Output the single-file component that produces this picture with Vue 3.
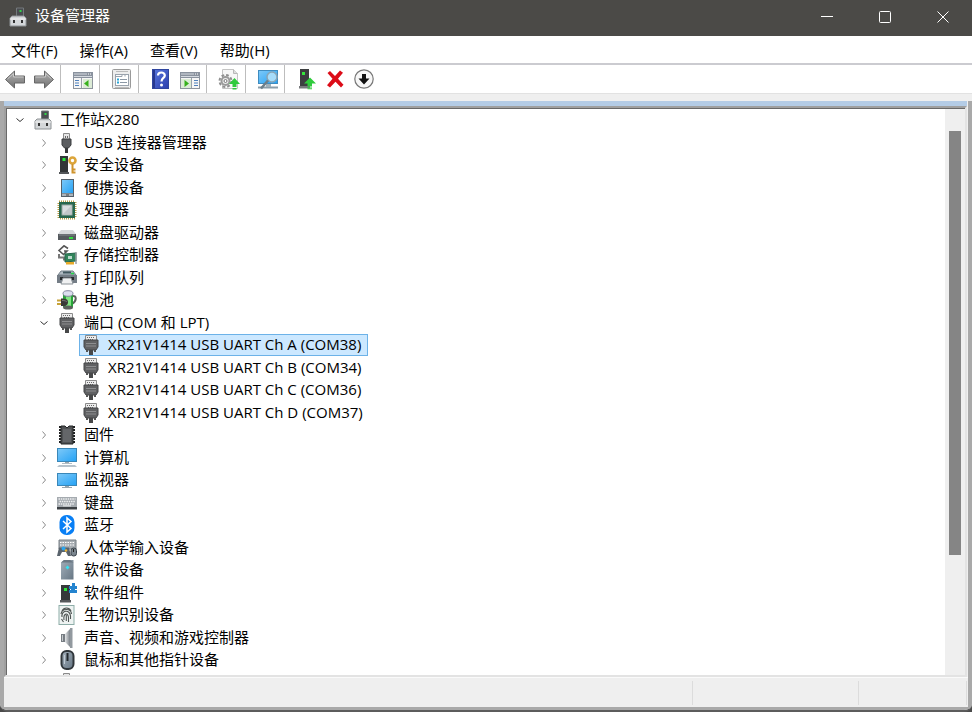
<script setup>
import { ref } from 'vue';

const menus = ['文件(F)', '操作(A)', '查看(V)', '帮助(H)'];

const toolGroups = [
    [{ icon: 'back', label: '后退' }, { icon: 'forward', label: '前进' }],
    [{ icon: 'tree', label: '显示/隐藏控制台树' }],
    [{ icon: 'props', label: '属性' }],
    [{ icon: 'help', label: '帮助' }, { icon: 'pane', label: '显示/隐藏操作窗格' }],
    [{ icon: 'update', label: '更新驱动程序' }],
    [{ icon: 'scan', label: '扫描检测硬件改动' }],
    [{ icon: 'enable', label: '启用设备' }, { icon: 'remove', label: '卸载设备' }, { icon: 'disable', label: '禁用设备' }]
];

const nodes = [
    { level: 0, icon: 'root', text: '工作站X280', open: true },
    { level: 1, icon: 'usb', text: 'USB 连接器管理器' },
    { level: 1, icon: 'security', text: '安全设备' },
    { level: 1, icon: 'portable', text: '便携设备' },
    { level: 1, icon: 'cpu', text: '处理器' },
    { level: 1, icon: 'disk', text: '磁盘驱动器' },
    { level: 1, icon: 'storage', text: '存储控制器' },
    { level: 1, icon: 'printer', text: '打印队列' },
    { level: 1, icon: 'battery', text: '电池' },
    { level: 1, icon: 'port', text: '端口 (COM 和 LPT)', open: true },
    { level: 2, icon: 'port', text: 'XR21V1414 USB UART Ch A (COM38)' },
    { level: 2, icon: 'port', text: 'XR21V1414 USB UART Ch B (COM34)' },
    { level: 2, icon: 'port', text: 'XR21V1414 USB UART Ch C (COM36)' },
    { level: 2, icon: 'port', text: 'XR21V1414 USB UART Ch D (COM37)' },
    { level: 1, icon: 'firmware', text: '固件' },
    { level: 1, icon: 'computer', text: '计算机' },
    { level: 1, icon: 'monitor', text: '监视器' },
    { level: 1, icon: 'keyboard', text: '键盘' },
    { level: 1, icon: 'bluetooth', text: '蓝牙' },
    { level: 1, icon: 'hid', text: '人体学输入设备' },
    { level: 1, icon: 'softdev', text: '软件设备' },
    { level: 1, icon: 'softcomp', text: '软件组件' },
    { level: 1, icon: 'finger', text: '生物识别设备' },
    { level: 1, icon: 'sound', text: '声音、视频和游戏控制器' },
    { level: 1, icon: 'mouse', text: '鼠标和其他指针设备' },
    { level: 1, icon: 'usb', text: '通用串行总线控制器' }
];

const selected = ref(10);
</script>

<template>
    <svg class="sprite" aria-hidden="true">
        <defs>
            <linearGradient id="g-blue" x1="0" y1="0" x2="1" y2="1">
                <stop offset="0" stop-color="#7cc8f8" /><stop offset="1" stop-color="#27a3f5" />
            </linearGradient>
            <linearGradient id="g-gray" x1="0" y1="0" x2="0" y2="1">
                <stop offset="0" stop-color="#b4b4b4" /><stop offset="1" stop-color="#707070" />
            </linearGradient>
            <linearGradient id="g-metal" x1="0" y1="0" x2="1" y2="0">
                <stop offset="0" stop-color="#e4e6e8" /><stop offset="1" stop-color="#7d848b" />
            </linearGradient>
            <linearGradient id="g-slate" x1="0" y1="0" x2="1" y2="1">
                <stop offset="0" stop-color="#a3afba" /><stop offset="1" stop-color="#667684" />
            </linearGradient>
            <linearGradient id="g-help" x1="0" y1="0" x2="1" y2="1">
                <stop offset="0" stop-color="#5877dd" /><stop offset="1" stop-color="#2c3fae" />
            </linearGradient>
        </defs>

        <!-- toolbar -->
        <symbol id="i-back" viewBox="0 0 22 22">
            <path d="M1.500 11.500 10.500 3v5h10v7h-10v5z" fill="url(#g-gray)" stroke="#666" stroke-linejoin="round" />
            <path d="M3.500 11 9.500 5.500V9h10" fill="none" stroke="#c8c8c8" />
        </symbol>
        <symbol id="i-forward" viewBox="0 0 22 22">
            <path d="M20.500 11.500 11.500 3v5h-10v7h10v5z" fill="url(#g-gray)" stroke="#666" stroke-linejoin="round" />
            <path d="M2.500 9h10V5.500L18.500 11" fill="none" stroke="#c8c8c8" />
        </symbol>
        <symbol id="i-tree" viewBox="0 0 22 22">
            <rect x="1.500" y="4.500" width="19" height="16" fill="#f6f6f6" stroke="#8d949d" />
            <path d="M1 4h20v6H1z" fill="#8a929e" />
            <path d="M2 6h13M2 8.500h18" stroke="#d5dae0" />
            <path d="M16 6h1M18 6h1" stroke="#fff" />
            <path d="M9.500 10v10" stroke="#9aa2ac" />
            <path d="M3 12.500h4M3 15h4M3 17.500h4" stroke="#4f81bd" />
            <path d="M11 11h9v9h-9z" fill="#dcebd6" />
            <path d="M16.500 12v7L12 15.500z" fill="#37b11c" />
        </symbol>
        <symbol id="i-pane" viewBox="0 0 22 22">
            <rect x="1.500" y="4.500" width="19" height="16" fill="#f6f6f6" stroke="#8d949d" />
            <path d="M1 4h20v6H1z" fill="#8a929e" />
            <path d="M2 6h13M2 8.500h18" stroke="#d5dae0" />
            <path d="M16 6h1M18 6h1" stroke="#fff" />
            <path d="M12.500 10v10" stroke="#9aa2ac" />
            <path d="M15 12.500h4M15 15h4M15 17.500h4" stroke="#4f81bd" />
            <path d="M2 11h10v9H2z" fill="#dcebd6" />
            <path d="M5.500 12v7l4.500-3.500z" fill="#37b11c" />
        </symbol>
        <symbol id="i-props" viewBox="0 0 22 22">
            <rect x="1.500" y="1.500" width="18" height="19" rx="1" fill="#ededed" stroke="#9a9a9a" />
            <path d="M5 3.500h12M4 19.500h14" stroke="#bbb" />
            <rect x="4.500" y="6.500" width="13" height="11" fill="#fff" stroke="#9aa3ad" />
            <path d="M5 8.500h6v-2h3v2" fill="none" stroke="#9aa3ad" />
            <path d="M6 11.500h2M6 14.500h2" stroke="#29a5d6" stroke-width="2" />
            <path d="M9 11.500h7M9 14.500h7" stroke="#8c98a5" />
        </symbol>
        <symbol id="i-help" viewBox="0 0 22 22">
            <rect x="2.500" y="1.500" width="16" height="19" fill="url(#g-help)" stroke="#2f459f" />
            <path d="M4 2v18" stroke="#26378f" stroke-width="2" />
            <path d="M8 7.500C8 3.500 14.800 3.500 14.800 7.500C14.800 10 11.500 10 11.500 13.500" fill="none" stroke="#fff" stroke-width="2.200" />
            <circle cx="11.500" cy="17" r="1.500" fill="#fff" />
        </symbol>
        <symbol id="i-update" viewBox="0 0 22 22">
            <path d="M4.500 1.500h11l4 4v15h-15z" fill="#f7f7f7" stroke="#c4c4c4" />
            <path d="M15.500 1.500v4h4" fill="#ddd" stroke="#b8b8b8" />
            <circle cx="7.500" cy="13" r="6" fill="none" stroke="#8f8f8f" stroke-width="2" stroke-dasharray="2.700 2" />
            <circle cx="7.500" cy="13" r="4" fill="#eee" stroke="#9a9a9a" stroke-width="2" />
            <circle cx="7.500" cy="13" r="1.500" fill="#fff" stroke="#777" />
            <path d="M16.500 10 22 16h-3.500v3h-4v-3H11z" fill="#2fca3c" />
            <path d="M14.500 20h4v1.500h-4z" fill="#2fca3c" />
        </symbol>
        <symbol id="i-scan" viewBox="0 0 22 22">
            <path d="M1 2h20v14H1z" fill="#3f8cc0" />
            <path d="M2 3h18v12H2z" fill="url(#g-blue)" />
            <path d="M1 19.500h20" stroke="#8a9da9" stroke-width="2" />
            <path d="M9 16h5v3H9z" fill="#9fb0ba" />
            <circle cx="15" cy="9" r="5" fill="#a6dcfa" stroke="#8aa5b5" stroke-width="1.500" />
            <path d="M11 12.500 4 20.500" stroke="#6d7e89" stroke-width="2.500" />
        </symbol>
        <symbol id="i-enable" viewBox="0 0 22 22">
            <path d="M4 1h9v17H4z" fill="#3c3e40" />
            <path d="M3 18h11v2.500H3z" fill="#77797c" />
            <path d="M6 4h3v3H6z" fill="#35e83c" />
            <path d="M14 9.500 20 15.500h-4V18h-4.500v-2.500H8z" fill="#2fca3c" />
            <path d="M11.500 18.500h4.500v1h-4.500zM11.500 20.300h4.500v1h-4.500z" fill="#2fca3c" />
        </symbol>
        <symbol id="i-remove" viewBox="0 0 22 22">
            <path d="M2.500 5 5 3l5 5 5-5.500 3 2.200-5 6 5.500 6L16 19.500l-5.500-5.800L5 19.500 2 17.200l5.500-6.500z" fill="#dc0c18" />
        </symbol>
        <symbol id="i-disable" viewBox="0 0 22 22">
            <circle cx="10" cy="11" r="9.200" fill="#f7f7f7" stroke="#777" stroke-width="1.200" />
            <path d="M8 6h4v4.500h3.500L10 16.500l-5.500-6H8z" fill="#111" />
        </symbol>

        <!-- device classes -->
        <symbol id="i-root" viewBox="0 0 20 20">
            <path d="M8.500 1h7v12h-7z" fill="#4a4d50" stroke="#74797d" />
            <path d="M11.500 3h2v2h-2z" fill="#30d648" />
            <path d="M4 9h12l2 2v8H2v-8z" fill="#d4d7d9" stroke="#8f9396" />
            <path d="M2 12h16" stroke="#f3f3f3" />
            <path d="M5 13h2v3H5zM13 13h2v3h-2z" fill="#333" />
        </symbol>
        <symbol id="i-usb" viewBox="0 0 20 20">
            <path d="M6.500.500h6V7h-6z" fill="#e6e6e6" stroke="#8a8a8a" />
            <path d="M8 3h1v2H8zM10 3h1v2h-1z" fill="#666" />
            <path d="M5 6h9v6l-2.500 3h-4L5 12z" fill="#5b5d60" stroke="#3b3c3e" />
            <path d="M8 15h3v5H8z" fill="#38393b" />
        </symbol>
        <symbol id="i-security" viewBox="0 0 20 20">
            <path d="M3 1h8v16H3z" fill="#333638" />
            <path d="M2 17h10v2H2z" fill="#54575a" />
            <path d="M5.500 3h3v3h-3z" fill="#27e83a" />
            <circle cx="15.500" cy="5.500" r="3" fill="none" stroke="#dca53b" stroke-width="2.600" />
            <path d="M15.500 9v9.500M15.500 14.500h3M15.500 17.500h3" stroke="#cf942c" stroke-width="2" />
        </symbol>
        <symbol id="i-portable" viewBox="0 0 20 20">
            <rect x="4" y="1" width="13" height="18" fill="#55606a" />
            <path d="M5 2h11v13H5z" fill="url(#g-blue)" />
            <path d="M5 15.500h11V18H5z" fill="#aab3bb" />
            <path d="M9 17h3" stroke="#444" />
        </symbol>
        <symbol id="i-cpu" viewBox="0 0 20 20">
            <rect x="2" y="2" width="16" height="16" fill="none" stroke="#b59b45" stroke-width="3" stroke-dasharray="1 1" />
            <rect x="2" y="2" width="16" height="16" fill="#27664d" />
            <rect x="5" y="5" width="10" height="10" fill="#d9dddf" stroke="#9caaa5" />
            <path d="m6 14 8-8v8z" fill="#c1c7ca" />
        </symbol>
        <symbol id="i-disk" viewBox="0 0 20 20">
            <path d="m4 7h12l3 4H1z" fill="#d6d8da" />
            <path d="M1 11h18v6H1z" fill="#555a5e" />
            <path d="M2 12h16" stroke="#85898d" />
            <path d="M12 14h4v2h-4z" fill="#35dd42" />
        </symbol>
        <symbol id="i-storage" viewBox="0 0 20 20">
            <path d="M11 3.500 7 .8 2 5.500l4.500 4 3.500-3.500H7" fill="none" stroke="#555" stroke-width="1.600" />
            <path d="M2 9v3.500h5v3" fill="none" stroke="#777" stroke-width="2" />
            <path d="m8 9 11-1v8l-11 1z" fill="#31845b" stroke="#24654a" />
            <path d="M11 11h4v3h-4z" fill="#bbd8cb" />
            <path d="M9 17h8v2.500H9z" fill="#e7a928" />
            <path d="M19 7v12" stroke="#9aa0a5" stroke-width="1.500" />
        </symbol>
        <symbol id="i-printer" viewBox="0 0 20 20">
            <path d="M4 3h12l3 4H1z" fill="#b0bac2" stroke="#74808a" />
            <path d="M6 4.500h8" stroke="#41575f" stroke-width="2" />
            <path d="M14 5.500h3" stroke="#20d945" stroke-width="1.500" />
            <path d="M0 7h20v8H0z" fill="#747d86" />
            <path d="M3 9h14v3H3z" fill="#282b2e" />
            <path d="M6 10h8l2 6H4z" fill="#f0f1f2" stroke="#8b9298" />
        </symbol>
        <symbol id="i-battery" viewBox="0 0 20 20">
            <path d="M15 6c5-1 5 5 0 8" fill="none" stroke="#5d625d" stroke-width="2" />
            <path d="M6 3h10v14H6z" fill="#29a33a" />
            <path d="M9 5h5v11H9z" fill="#83e583" />
            <ellipse cx="11" cy="3.500" rx="5" ry="2.800" fill="#dcdeef" stroke="#8586a0" />
            <ellipse cx="11" cy="17.500" rx="5" ry="2" fill="#5b625c" />
            <path d="M0 10.500h4M0 14h4" stroke="#c7a238" stroke-width="1.800" />
            <path d="M4 8.500c5 0 7 1 7 3.700s-2 4.300-7 3.800z" fill="#3a3a38" />
            <path d="M5 10.500c3 0 4 .500 5 1.500" fill="none" stroke="#777" />
        </symbol>
        <symbol id="i-port" viewBox="0 0 20 20">
            <path d="M4.500.500h11V6h-11z" fill="#ededed" stroke="#8b8b8b" />
            <path d="M6 2.500h1M8 2.500h1M10 2.500h1M12 2.500h1M7 4.500h1M9 4.500h1M11 4.500h1" stroke="#666" />
            <path d="M3 5h14v7l-2 3H5l-2-3z" fill="#606163" stroke="#454648" />
            <path d="M5 8.500h10M5 11h10" stroke="#8d8e90" />
            <path d="M5 15h2v2H5zM13 15h2v2h-2z" fill="#555" />
            <path d="M8 15h4v5H8z" fill="#474849" />
        </symbol>
        <symbol id="i-firmware" viewBox="0 0 20 20">
            <path d="M3.500 1v18M16.500 1v18" stroke="#202122" stroke-width="3" stroke-dasharray="2 1" />
            <path d="M4 1h4l2 2 2-2h4v18H4z" fill="#505254" stroke="#252627" />
            <path d="M6 4h8v13H6z" fill="#646669" />
        </symbol>
        <symbol id="i-computer" viewBox="0 0 20 20">
            <path d="M0 0h20v14H0z" fill="#3a87b8" />
            <path d="M1 1h18v12H1z" fill="url(#g-blue)" />
            <path d="M8 14h4v1H8z" fill="#99a6ae" /><path d="M5 15.500h10" stroke="#b3bec5" />
            <path d="M2 17h16l2 2H0z" fill="#b7c3cc" />
        </symbol>
        <symbol id="i-monitor" viewBox="0 0 20 20">
            <path d="M0 3h20v13H0z" fill="#3a87b8" />
            <path d="M1 4h18v11H1z" fill="url(#g-blue)" />
            <path d="M8 16h4v1H8z" fill="#99a6ae" /><path d="M5 17.500h10" stroke="#9aa7af" />
        </symbol>
        <symbol id="i-keyboard" viewBox="0 0 20 20">
            <path d="M0 4h20v10H0z" fill="#a5abb0" />
            <path d="M0 14h20v2.500H0z" fill="#3c4145" />
            <path d="M1.500 6h17M2.500 8.500h16M1.500 11h16" stroke="#eef0f1" stroke-width="1.400" stroke-dasharray="1.500 .8" />
            <path d="M6 12.800h8" stroke="#e8eaeb" />
        </symbol>
        <symbol id="i-bluetooth" viewBox="0 0 20 20">
            <rect x="2.500" y="0" width="15" height="20" rx="7" fill="#087ff5" />
            <path d="m6 6 8 7.500-4 3.500V3l4 3.500-8 7.500" fill="none" stroke="#fff" stroke-width="1.500" />
        </symbol>
        <symbol id="i-hid" viewBox="0 0 20 20">
            <path d="M2 2h17v9H2z" fill="#a7adb2" stroke="#777e84" />
            <path d="M3 4.500h15M3 7h15" stroke="#fff" stroke-dasharray="1.500 1" />
            <path d="M2 9.500h10l2 8.500h-3l-2-4H5l-2 4H0z" fill="#59636c" />
            <circle cx="6.500" cy="10.500" r="2" fill="#2da5ed" /><circle cx="9" cy="12.500" r="1.300" fill="#e9b43a" />
            <rect x="14" y="10" width="5.500" height="8" rx="2.500" fill="#7a858e" stroke="#39434b" />
            <path d="M16.500 11v3" stroke="#222" />
        </symbol>
        <symbol id="i-softdev" viewBox="0 0 20 20">
            <path d="M4 2.500 7 0h9.500v19.500H4z" fill="url(#g-slate)" />
            <path d="M4 2.500 7 0h6l3.500 2.500z" fill="#6b7883" />
            <path d="m10.500 5.500 2 2-2 2-2-2z" fill="#34e3f3" />
        </symbol>
        <symbol id="i-softcomp" viewBox="0 0 20 20">
            <path d="M4 2h9v15H4z" fill="#35383a" />
            <path d="M3 17h11v2.500H3z" fill="#55585b" />
            <path d="M7 5h3v3H7z" fill="#2be63a" />
            <path d="M15 0h3v3h2v3h-2v1h2v3h-8V7h2V6h-2V3h3z" fill="#2484cf" />
        </symbol>
        <symbol id="i-finger" viewBox="0 0 20 20">
            <rect x="2" y=".5" width="15" height="19" fill="#eef3f2" stroke="#8dada8" />
            <path d="M5 6c2-4 7-4 9 0M4 9c1-6 10-6 10.500 0M5 12c-1-7 8-8 8.500-1v3M7 15c-1-7 4.500-8 4.500-2v4M9.300 10v6M4.500 14l2 3" fill="none" stroke="#4f5554" stroke-width="1.100" />
        </symbol>
        <symbol id="i-sound" viewBox="0 0 20 20">
            <path d="M4 6h4v8H4z" fill="#777d83" />
            <path d="m8 6 5-5v18l-5-5z" fill="url(#g-metal)" />
            <path d="M13 0h2.500v20H13z" fill="#92999f" />
            <path d="M5.500 7v6" stroke="#c5c9cc" />
        </symbol>
        <symbol id="i-mouse" viewBox="0 0 20 20">
            <rect x="4.500" y="1" width="12" height="18" rx="5" fill="url(#g-slate)" stroke="#30363b" stroke-width="2" />
            <path d="M10.500 3v8" stroke="#20262b" stroke-width="2" />
            <path d="M7.500 5v9" stroke="#c0cad3" />
        </symbol>
    </svg>

    <div class="window">
        <header class="titlebar">
            <svg class="title-icon"><use href="#i-root" /></svg>
            <h1>设备管理器</h1>
            <div class="window-actions">
                <button aria-label="最小化"><svg viewBox="0 0 12 12"><path d="M0 5.500h12" /></svg></button>
                <button aria-label="最大化"><svg viewBox="0 0 12 12"><rect x=".5" y=".5" width="11" height="11" rx="1" /></svg></button>
                <button aria-label="关闭"><svg viewBox="0 0 12 12"><path d="m.5.500 11 11m0-11-11 11" /></svg></button>
            </div>
        </header>

        <nav class="menubar">
            <button v-for="menu in menus" :key="menu">{{ menu }}</button>
        </nav>

        <div class="toolbar">
            <div v-for="(group, i) in toolGroups" :key="i" class="tool-group">
                <button v-for="tool in group" :key="tool.icon" :aria-label="tool.label">
                    <svg><use :href="'#i-' + tool.icon" /></svg>
                </button>
            </div>
        </div>

        <div class="frame">
            <div class="panel">
                <ul class="tree">
                    <li v-for="(node, i) in nodes" :key="i" :class="'level-' + node.level">
                        <button v-if="node.level < 2" class="toggle" :class="{ open: node.open }" :aria-label="node.open ? '折叠' : '展开'">
                            <svg viewBox="0 0 8 8"><path d="m2.500.500 3 3.500-3 3.500" /></svg>
                        </button>
                        <button class="node" :class="{ selected: selected === i }" @click="selected = i">
                            <svg><use :href="'#i-' + node.icon" /></svg>
                            <span>{{ node.text }}</span>
                        </button>
                    </li>
                </ul>
                <div class="scrollbar"><div class="thumb"></div></div>
            </div>
            <footer class="statusbar">
                <div class="status-main"></div>
                <div class="status-mid"></div>
                <div class="status-end"></div>
            </footer>
        </div>
    </div>
</template>

<style>
body {
    background-color: #4b4b4b;
}
</style>

<style scoped>
.sprite {
    position: absolute;
    width: 0;
    height: 0;
}

.window {
    display: flex;
    flex-direction: column;
    height: 100vh;
    overflow: hidden;
    box-sizing: border-box;
    border-bottom: 2px solid #5c5c5c;
    border-radius: 0 0 8px 8px;
    background-color: #efefef;
    color: black;
    font-family: "Open Sans", "Noto Sans CJK SC", sans-serif;
    font-size: 15px;
}

button {
    margin: 0;
    padding: 0;
    border: 0;
    background: none;
    color: inherit;
    font: inherit;
}

.titlebar {
    display: flex;
    align-items: center;
    flex: none;
    height: 34px;
    padding: 0 0 2px 8px;
    background-color: #4b4a47;
    color: white;
}

.title-icon {
    width: 20px;
    height: 20px;
}

h1 {
    flex: 1;
    margin: 0;
    padding: 0 0 4px 7px;
    font-size: 15px;
    font-weight: normal;
    line-height: 20px;
}

.window-actions {
    display: flex;
    height: 100%;
}

.window-actions button {
    width: 58px;
}

.window-actions svg {
    display: block;
    width: 12px;
    height: 12px;
    margin: 0 auto;
    fill: none;
    stroke: white;
}

.menubar {
    display: flex;
    flex: none;
    gap: 2px;
    height: 27px;
    padding-left: 1px;
    background-color: white;
    border-bottom: 2px solid #cbcbd0;
}

.menubar button {
    padding: 0 10px;
    line-height: 26px;
}

.toolbar {
    display: flex;
    flex: none;
    height: 28px;
    background-color: white;
    border-bottom: 1px solid #e2e2e2;
}

.tool-group {
    display: flex;
}

.tool-group + .tool-group {
    margin-left: 2px;
    padding-left: 7px;
    border-left: 1px solid #bdbdbd;
}

.tool-group button {
    display: flex;
    align-items: center;
    justify-content: center;
    width: 29px;
}

.tool-group svg {
    width: 22px;
    height: 22px;
}

.frame {
    display: flex;
    flex-direction: column;
    flex: 1;
    min-height: 0;
    margin-top: 7px;
    border: solid #a9a9a9;
    border-width: 0 4px 3px;
}

.panel {
    display: flex;
    flex: 1;
    min-height: 0;
    margin: 5px 1px 0 0;
    padding: 1px 0 0 1px;
    border: 2px solid;
    border-color: #a0a0a0 #e3e3e3 #e3e3e3 #a0a0a0;
    box-shadow: 0 -5px #b4cce6, inset 1px 1px #696969;
    background-color: white;
}

.tree {
    flex: 1;
    margin: 0;
    padding: 0 0 0 3px;
    overflow: hidden;
    list-style: none;
}

.tree li {
    display: flex;
    align-items: center;
    height: 22px;
}

.tree li:nth-child(even) {
    height: 23px;
}

.level-1 {
    padding-left: 24px;
}

.level-2 {
    padding-left: 69px;
}

.toggle {
    width: 20px;
    height: 20px;
    margin-right: 1px;
}

.toggle svg {
    display: block;
    width: 8px;
    height: 8px;
    margin: 0 auto;
    fill: none;
    stroke: #8b8b8b;
}

.toggle.open svg {
    transform: rotate(90deg);
    stroke: #333;
}

.node {
    display: flex;
    align-items: center;
    box-sizing: border-box;
    height: 100%;
    padding: 0 6px 0 1px;
    border: 1px solid transparent;
    line-height: 20px;
    white-space: nowrap;
}

.node svg {
    width: 20px;
    height: 20px;
    margin-right: 7px;
}

.node span {
    padding-bottom: 2px;
}

.node.selected {
    border-color: #6cb2e8;
    background-color: #cce8ff;
}

.scrollbar {
    width: 20px;
    box-sizing: border-box;
    padding-top: 22px;
    background-color: #efefef;
}

.thumb {
    width: 12px;
    height: 78%;
    margin: 0 auto;
    background-color: #858585;
}

.statusbar {
    display: flex;
    flex: none;
    height: 24px;
    padding: 3px 1px 2px 0;
    border-top: 1px solid #fafafa;
    background-color: #efefef;
}

.statusbar div {
    border-right: 1px solid #dcdcdc;
}

.status-main {
    flex: 1;
}

.status-mid {
    width: 165px;
}

.status-end {
    width: 107px;
}
</style>
